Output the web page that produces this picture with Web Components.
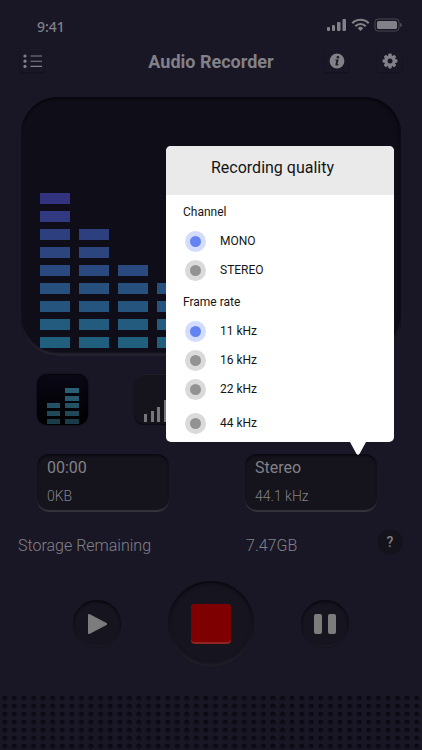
<!DOCTYPE html>
<html lang="en">
<head>
<meta charset="UTF-8">
<meta name="viewport" content="width=device-width, initial-scale=1">
<title>Audio Recorder</title>
<style>
    body {
        margin: 0;
        background: #191726;
        color: #828187;
        font-family: Roboto, "Liberation Sans", sans-serif;
    }
</style>
</head>
<body>
<recorder-app></recorder-app>

<script>
// Shared by all elements with buttons
const buttonReset = `
    button {
        display: grid;
        place-items: center;
        padding: 0;
        border: 0;
        background: none;
        color: inherit;
        font: inherit;
        cursor: pointer;
    }
`;

// Icons
const icons = new Map([
    ['list', `<svg width="19" height="15" viewBox="0 0 19 15" fill="currentColor">
        <circle cx="2" cy="2" r="1.6"/><circle cx="2" cy="7.2" r="1.6"/><circle cx="2" cy="12.4" r="1.6"/>
        <path d="M7.5 2H19M7.5 7.2H19M7.5 12.4H19" stroke="currentColor" stroke-width="1.1"/></svg>`],
    ['info', `<svg width="16" height="16" viewBox="0 0 16 16">
        <circle cx="8" cy="8" r="7.4" fill="currentColor"/>
        <g fill="#191726"><circle cx="8.9" cy="4.2" r="1.3"/>
        <path d="M5.8 6.7 9.6 6.2 8.5 11c-.1.6.2.7 1.2-.1l.3.4c-1.3 1.6-3.9 1.9-3.5-.1l.8-3.6c.1-.4-.3-.5-1.5-.4z"/></g></svg>`],
    ['gear', `<svg width="16" height="16" viewBox="0 0 16 16">
        <g fill="currentColor"><circle cx="8" cy="8" r="5.8"/>
        <rect x="6.3" y="0.6" width="3.4" height="14.8" rx="1"/>
        <rect x="0.6" y="6.3" width="14.8" height="3.4" rx="1"/>
        <g transform="rotate(45 8 8)"><rect x="6.3" y="0.6" width="3.4" height="14.8" rx="1"/>
        <rect x="0.6" y="6.3" width="14.8" height="3.4" rx="1"/></g></g>
        <circle cx="8" cy="8" r="2.5" fill="#191726"/></svg>`],
    ['bars', `<svg width="51" height="51" viewBox="0 0 51 51">
        <g fill="#2a6075">
        <path d="M28 14h14v5H28z"/><path d="M28 22h14v5H28z" opacity=".92"/>
        <path d="M10 29h13v5H10zM28 29h14v5H28z" opacity=".85"/>
        <path d="M10 37h13v5H10zM28 37h14v5H28z" opacity=".75"/>
        <path d="M10 45h13v5H10zM28 45h14v5H28z" opacity=".62"/></g></svg>`],
    ['levels', `<svg width="51" height="51" viewBox="0 0 51 51" fill="#77767b">
        <path d="M10 40h3v8h-3zM17 37h3v11h-3zM23 33h3v15h-3zM30 26h3v22h-3zM36 20h3v28h-3z"/></svg>`],
    ['play', `<svg width="20" height="22" viewBox="0 0 20 22">
        <path d="M2 2 19 11 2 20z" fill="#7c7c7c" stroke="#7c7c7c" stroke-width="2" stroke-linejoin="round"/></svg>`],
    ['pause', `<svg width="22" height="22" viewBox="0 0 22 22" fill="#7c7c7c">
        <rect x="0" y="1" width="8" height="20" rx="2"/><rect x="14" y="1" width="8" height="20" rx="2"/></svg>`],
    ['stop', `<svg width="40" height="40" viewBox="0 0 40 40">
        <rect width="40" height="40" rx="4" fill="#922323"/><rect width="40" height="38" rx="4" fill="#7f0000"/></svg>`]
]);

// Phone status bar
customElements.define('status-bar', class extends HTMLElement {
    constructor() {
        super();
        this.attachShadow({ mode: 'open' }).innerHTML = `
            <style>
                :host {
                    display: flex;
                    justify-content: space-between;
                    align-items: center;
                    height: 50px;
                    padding: 0 20px 0 37px;
                    box-sizing: border-box;
                    font: 500 14px/20px "Noto Sans", "Open Sans", sans-serif;
                }
                span { padding-top: 3px; }
            </style>
            <span><slot></slot></span>
            <svg width="76" height="14" viewBox="0 0 76 14" fill="currentColor">
                <rect x="1" y="9" width="3" height="4" rx="1"/>
                <rect x="6" y="7" width="3" height="6" rx="1"/>
                <rect x="11" y="4" width="3.5" height="9" rx="1"/>
                <rect x="16.5" y="1" width="3.5" height="12" rx="1"/>
                <g fill="none" stroke="currentColor" stroke-width="2.2">
                    <path d="M26.3 5.2a11.5 11.5 0 0 1 16.4 0"/>
                    <path d="M29.3 8.2a7.3 7.3 0 0 1 10.4 0"/>
                </g>
                <path d="M34.5 13l-2.7-2.8a3.8 3.8 0 0 1 5.4 0z"/>
                <rect x="49" y="1" width="24" height="12" rx="3" fill="none" stroke="#49474f"/>
                <rect x="51" y="3" width="20" height="8" rx="1.5"/>
                <path d="M74 5a2 2 0 0 1 0 4z" fill="#49474f"/>
            </svg>
        `;
    }
});

// Button with an icon, look depends on the "kind" attribute
customElements.define('icon-button', class extends HTMLElement {
    constructor() {
        super();
        this.attachShadow({ mode: 'open' });
    }

    connectedCallback() {
        const label = this.getAttribute('label');
        const icon = icons.get(this.getAttribute('icon')) || '<slot></slot>';
        this.shadowRoot.innerHTML = `
            <style>
                ${buttonReset}
                :host { display: block; }
                button {
                    width: 25px;
                    height: 22px;
                    border-radius: 3px;
                    box-shadow: 0 1px 1px #12111c, 0 -1px 1px #1c1a28;
                }
                svg { display: block; }
                :host([kind="tile"]) button {
                    width: 51px;
                    height: 51px;
                    border-radius: 10px;
                    background: #15131c;
                    box-shadow: inset 0 1px 1px #24222c, inset 0 -1px 1px #0c0b12, 0 0 1px #0c0b12;
                }
                :host([kind="tile"][pressed]) button {
                    background: linear-gradient(#090815, #000);
                    box-shadow: inset 0 0 2px #000, 0 0 2px #0b0a12;
                }
                :host([kind="round"]) button {
                    width: 48px;
                    height: 48px;
                    border-radius: 50%;
                    background: #16151f;
                    box-shadow: inset 0 2px 2px #0b0a12, inset 0 0 2px #100f18, inset 0 -2px 2px #1e1d27;
                }
                :host([kind="round"][large]) button {
                    width: 86px;
                    height: 86px;
                    box-shadow: inset 0 2px 2px #0b0a12, inset 0 -3px 3px #201f29, inset 0 0 4px #100f18;
                }
                :host([kind="help"]) button {
                    width: 24px;
                    height: 24px;
                    border-radius: 50%;
                    background: #14131c;
                    box-shadow: 0 0 1px #0e0d15;
                    font-size: 14px;
                    font-weight: 500;
                }
            </style>
            <button type="button" aria-label="${label}">${icon}</button>
        `;
    }
});

// Equalizer screen
const ROWS = 13;
const topColor = [51, 52, 128];
const bottomColor = [32, 96, 126];

customElements.define('level-screen', class extends HTMLElement {
    constructor() {
        super();
        this.attachShadow({ mode: 'open' });
    }

    connectedCallback() {
        const levels = this.getAttribute('levels').split(' ').map(Number);
        this.shadowRoot.innerHTML = `
            <style>
                :host {
                    display: grid;
                    grid-template-columns: repeat(${levels.length}, 1fr);
                    gap: 9px;
                    padding: 24px 18px 8px 19px;
                    border-radius: 37px;
                    background: #0f0e18;
                    box-shadow: inset 0 2px 2px #08070e, inset 0 -3px 2px #25232f, inset -2px 0 3px #0b0a12;
                }
                .column {
                    display: flex;
                    flex-direction: column-reverse;
                    gap: 7px;
                }
                .cell { height: 11px; }
            </style>
        `;
        for (let level of levels) {
            const column = document.createElement('div');
            column.classList.add('column');
            for (let row = 0; row < ROWS; row++) {
                const cell = document.createElement('div');
                cell.classList.add('cell');
                if (row < level) {
                    const part = row / 8;
                    const color = bottomColor.map((c, i) => Math.round(c + (topColor[i] - c) * part));
                    cell.style.background = `rgb(${color})`;
                }
                column.appendChild(cell);
            }
            this.shadowRoot.appendChild(column);
        }
    }
});

// Card with two lines, the popup hangs over it
customElements.define('info-card', class extends HTMLElement {
    constructor() {
        super();
        this.attachShadow({ mode: 'open' }).innerHTML = `
            <style>
                :host {
                    display: block;
                    position: relative;
                    height: 58px;
                    padding: 4px 10px;
                    box-sizing: border-box;
                    border-radius: 12px;
                    background: #15131c;
                    box-shadow: inset 0 2px 2px #0b0a12, inset 0 -2px 1px #34323c;
                }
                .value { font-size: 16px; line-height: 20px; }
                .detail {
                    margin-top: 8px;
                    font-size: 14px;
                    font-weight: 300;
                    line-height: 20px;
                }
            </style>
            <div class="value"><slot name="value"></slot></div>
            <div class="detail"><slot name="detail"></slot></div>
            <slot name="popup"></slot>
        `;
    }
});

// Radio buttons
customElements.define('choice-group', class extends HTMLElement {
    constructor() {
        super();
        this.attachShadow({ mode: 'open' });
    }

    connectedCallback() {
        const options = this.getAttribute('options').split(',');
        this.shadowRoot.innerHTML = `
            <style>
                :host { display: block; }
                fieldset {
                    margin: 0;
                    padding: 0;
                    border: 0;
                }
                legend {
                    padding: 0 0 9px;
                    font-size: 12px;
                    line-height: 20px;
                }
                .list {
                    display: flex;
                    flex-direction: column;
                    gap: 8px;
                }
                label {
                    display: flex;
                    gap: 14px;
                    margin-left: 2px;
                    font-size: 12px;
                    line-height: 20px;
                }
                :host([spaced]) label:last-child { margin-top: 5px; }
                input {
                    appearance: none;
                    width: 21px;
                    height: 21px;
                    margin: 0;
                    border: 5px solid #dadada;
                    border-radius: 50%;
                    background: #929292;
                }
                input:checked {
                    border-color: #d3dcfc;
                    background: #6283f1;
                }
            </style>
            <fieldset>
                <legend>${this.getAttribute('legend')}</legend>
                <div class="list"></div>
            </fieldset>
        `;
        const list = this.shadowRoot.querySelector('.list');
        options.forEach((name, i) => {
            const label = document.createElement('label');
            const input = document.createElement('input');
            input.type = 'radio';
            input.name = 'choice';
            input.value = name;
            input.checked = i === 0;
            label.append(input, name);
            list.appendChild(label);
        });
    }
});

// Popup with a pointer
customElements.define('quality-popup', class extends HTMLElement {
    constructor() {
        super();
        this.attachShadow({ mode: 'open' }).innerHTML = `
            <style>
                :host {
                    display: block;
                    position: absolute;
                    right: -17px;
                    bottom: calc(100% + 12px);
                    z-index: 2;
                    width: 228px;
                    border-radius: 5px;
                    background: #fff;
                    color: #151515;
                }
                :host::after {
                    content: "";
                    position: absolute;
                    top: 100%;
                    right: 28px;
                    width: 16px;
                    height: 13px;
                    background: #fff;
                    clip-path: polygon(0 0, 100% 0, 60% 90%, 50% 100%, 40% 90%);
                }
                h2 {
                    margin: 0;
                    padding: 10px 0 15px 45px;
                    border-radius: 5px 5px 0 0;
                    background: #eaeaea;
                    font-size: 16px;
                    font-weight: 400;
                    line-height: 24px;
                }
                .body {
                    display: flex;
                    flex-direction: column;
                    gap: 11px;
                    padding: 7px 17px 8px;
                }
            </style>
            <h2><slot name="title"></slot></h2>
            <div class="body"><slot></slot></div>
        `;
    }
});

// Speaker holes
customElements.define('speaker-grille', class extends HTMLElement {
    constructor() {
        super();
        this.attachShadow({ mode: 'open' }).innerHTML = `
            <style>
                :host {
                    display: block;
                    flex: 1;
                    min-height: 54px;
                    background-image:
                        radial-gradient(circle at 50% 60%, #13121c 1px, transparent 2px),
                        radial-gradient(circle at 50% 40%, #0a0912 2px, transparent 3px);
                    background-size: calc(100% / 44) 8px;
                }
            </style>
        `;
    }
});

// The whole page
customElements.define('recorder-app', class extends HTMLElement {
    constructor() {
        super();
        this.attachShadow({ mode: 'open' }).innerHTML = `
            <style>
                :host {
                    display: flex;
                    flex-direction: column;
                    min-height: 100vh;
                }
                header {
                    display: grid;
                    grid-template-columns: 1fr auto 1fr;
                    align-items: center;
                    height: 22px;
                    padding: 0 20px;
                }
                h1 {
                    margin: 0;
                    padding-top: 2px;
                    font-size: 18px;
                    font-weight: 700;
                    line-height: 20px;
                }
                .actions {
                    display: flex;
                    justify-content: flex-end;
                    gap: 28px;
                }
                level-screen { margin: 25px 21px 0; }
                .modes {
                    display: flex;
                    gap: 46px;
                    margin: 18px 37px 0;
                }
                .cards {
                    display: grid;
                    grid-template-columns: 1fr 1fr;
                    gap: 76px;
                    margin: 29px 45px 0 37px;
                }
                .storage {
                    display: grid;
                    grid-template-columns: 19fr 11fr auto;
                    align-items: end;
                    height: 27px;
                    margin: 18px 20px 0 18px;
                    font-size: 16px;
                    font-weight: 300;
                    line-height: 22px;
                }
                .storage icon-button { align-self: start; }
                .controls {
                    display: flex;
                    justify-content: center;
                    align-items: center;
                    gap: 47px;
                    margin: 24px 0 28px;
                }
            </style>
            <status-bar>9:41</status-bar>
            <header>
                <icon-button icon="list" label="Recordings"></icon-button>
                <h1>Audio Recorder</h1>
                <div class="actions">
                    <icon-button icon="info" label="Info"></icon-button>
                    <icon-button icon="gear" label="Settings"></icon-button>
                </div>
            </header>
            <level-screen levels="9 7 5 4 3 2 2 1 1"></level-screen>
            <div class="modes">
                <icon-button kind="tile" icon="bars" label="Equalizer view" pressed></icon-button>
                <icon-button kind="tile" icon="levels" label="Levels view"></icon-button>
            </div>
            <div class="cards">
                <info-card>
                    <span slot="value">00:00</span>
                    <span slot="detail">0KB</span>
                </info-card>
                <info-card>
                    <span slot="value">Stereo</span>
                    <span slot="detail">44.1 kHz</span>
                    <quality-popup slot="popup">
                        <span slot="title">Recording quality</span>
                        <choice-group legend="Channel" options="MONO,STEREO"></choice-group>
                        <choice-group legend="Frame rate" options="11 kHz,16 kHz,22 kHz,44 kHz" spaced></choice-group>
                    </quality-popup>
                </info-card>
            </div>
            <div class="storage">
                <span>Storage Remaining</span>
                <span>7.47GB</span>
                <icon-button kind="help" label="Help">?</icon-button>
            </div>
            <div class="controls">
                <icon-button kind="round" icon="play" label="Play"></icon-button>
                <icon-button kind="round" icon="stop" label="Stop" large></icon-button>
                <icon-button kind="round" icon="pause" label="Pause"></icon-button>
            </div>
            <speaker-grille></speaker-grille>
        `;
    }
});
</script>
</body>
</html>
